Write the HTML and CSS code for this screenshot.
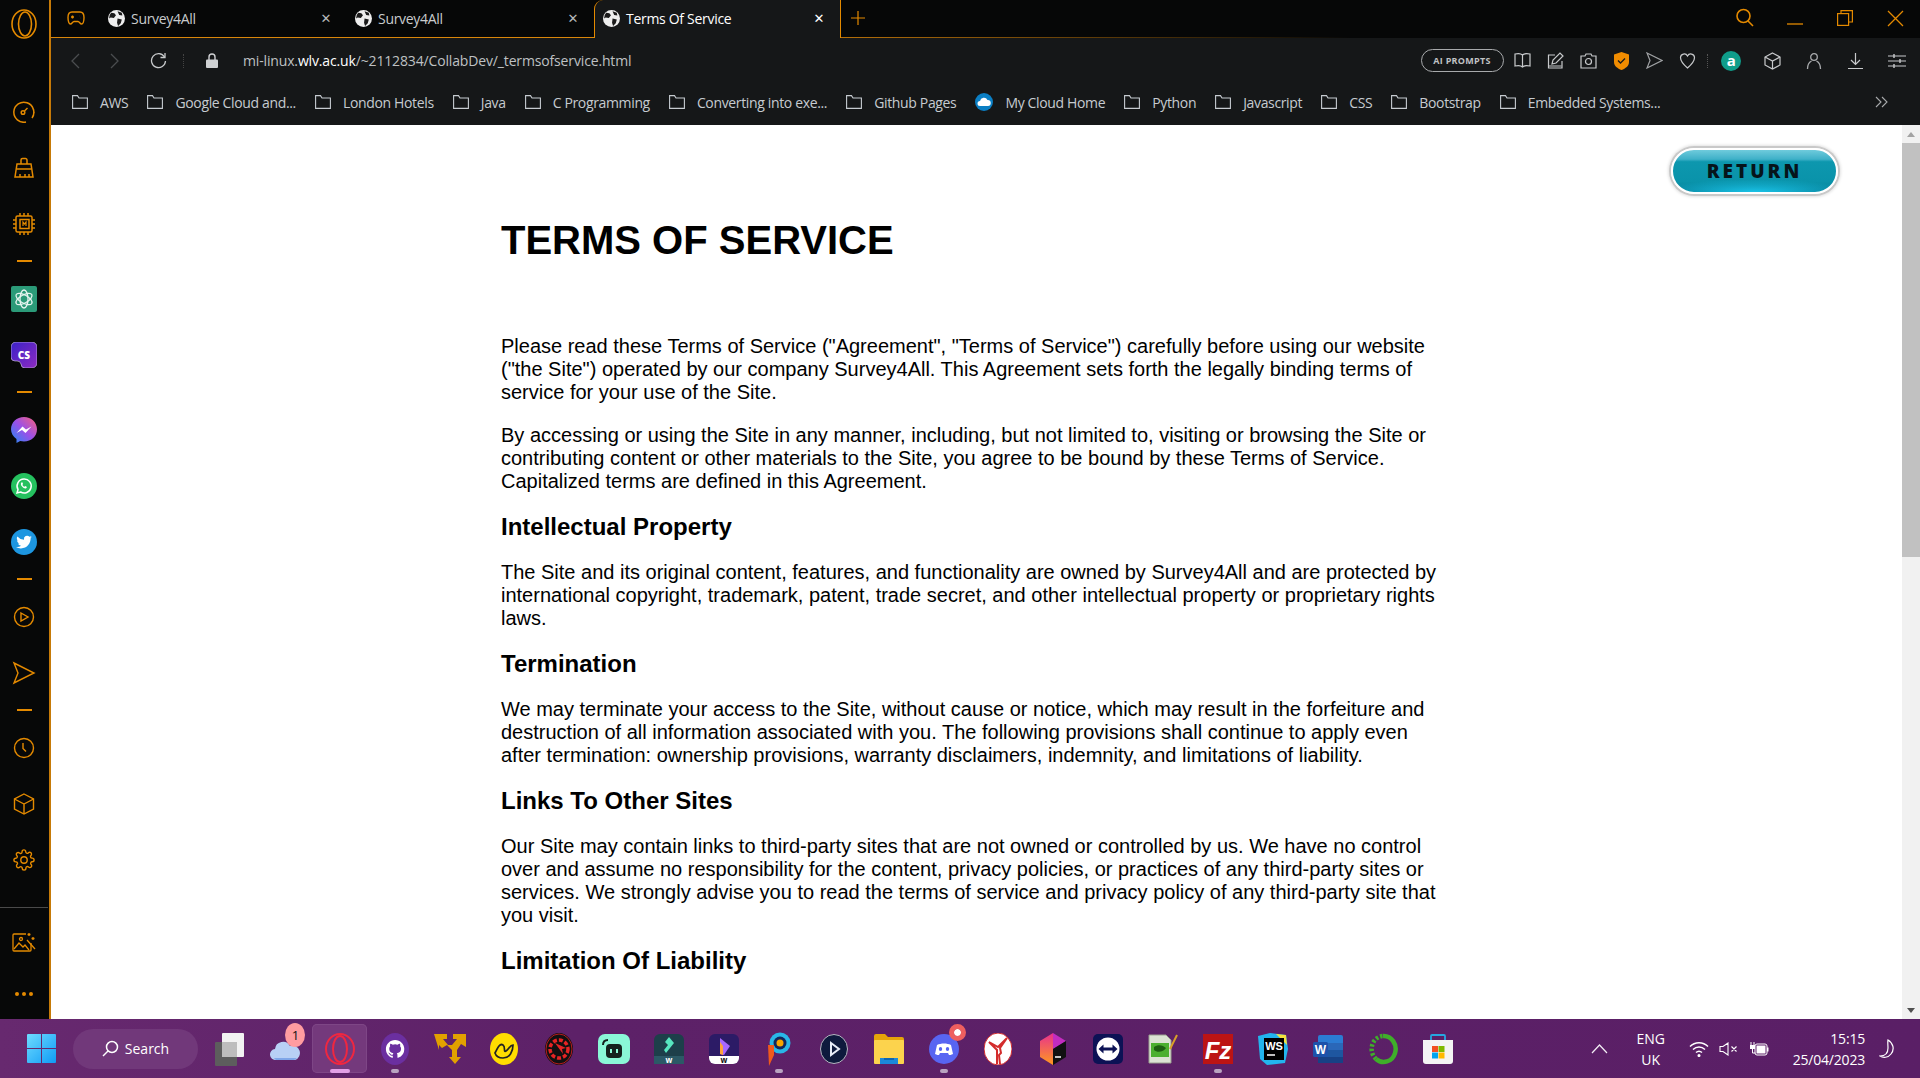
FILE: index.html
```html
<!DOCTYPE html>
<html lang="en">
<head>
    <meta charset="UTF-8">
    <title>Terms Of Service</title>
    <link rel="stylesheet" href="styles.css">
</head>
<body>
<div class="window">
    <aside class="sidebar">
        <div class="side-logo">
            <svg width="26" height="30" viewBox="0 0 26 30" fill="none" stroke="#e48a00" stroke-width="1.6"><ellipse cx="13" cy="15" rx="12" ry="14"/><ellipse cx="14" cy="15" rx="6.5" ry="12"/></svg>
        </div>
        <div class="side-group">
            <div class="side-icon"><svg width="22" height="22" viewBox="0 0 22 22" fill="none" stroke="#e48a00" stroke-width="1.5"><path d="M19 17a10 10 0 1 0-6 4"/><path d="M20.5 8v.5M20.8 11v.5M20.3 14v.5"/><circle cx="10" cy="11.5" r="1.8"/><path d="M11.5 10l3-3"/></svg></div>
            <div class="side-icon"><svg width="22" height="22" viewBox="0 0 22 22" fill="none" stroke="#e48a00" stroke-width="1.5"><path d="M8 7V3a1.5 1.5 0 0 1 1.5-1.5h3A1.5 1.5 0 0 1 14 3v4"/><path d="M4 7h14l2 13H2z"/><path d="M3.500 12h15M7 20v-3M12 20v-3M16 20v-3"/></svg></div>
            <div class="side-icon"><svg width="24" height="24" viewBox="0 0 24 24" fill="none" stroke="#e48a00" stroke-width="1.5"><rect x="4" y="4" width="16" height="16" rx="1.500"/><rect x="8" y="7.500" width="9" height="9"/><path d="M8 1v3M12 1v3M16 1v3M8 20v3M12 20v3M16 20v3M1 8h3M1 12h3M1 16h3M20 8h3M20 12h3M20 16h3"/><path d="M11 14v-4l1.500 2 1.500-2v4" stroke-width="1.200"/></svg></div>
        </div>
        <div class="side-line"></div>
        <div class="side-group">
            <div class="side-icon"><svg width="26" height="26" viewBox="0 0 26 26"><rect width="26" height="26" rx="2" fill="#2b9a78"/><g fill="none" stroke="#e6f4ef" stroke-width="1.300"><ellipse cx="13" cy="13" rx="4" ry="9"/><ellipse cx="13" cy="13" rx="4" ry="9" transform="rotate(60 13 13)"/><ellipse cx="13" cy="13" rx="4" ry="9" transform="rotate(120 13 13)"/></g></svg></div>
            <div class="side-icon"><svg width="26" height="26" viewBox="0 0 26 26"><defs><linearGradient id="csGrad" x1="0" y1="0" x2="1" y2="1"><stop offset="0" stop-color="#3a22c8"/><stop offset="1" stop-color="#8e2ac0"/></linearGradient></defs><path d="M5 0h16a5 5 0 0 1 5 5v16a5 5 0 0 1-5 5h-7a4 4 0 0 1-4-4 4 4 0 0 0-4-3H4a4 4 0 0 1-4-4V5a5 5 0 0 1 5-5z" fill="url(#csGrad)" stroke="#d8d0e8" stroke-width=".6"/><text x="13" y="17" class="cs-text">CS</text></svg></div>
        </div>
        <div class="side-line"></div>
        <div class="side-group">
            <div class="side-icon"><svg width="26" height="26" viewBox="0 0 26 26"><defs><linearGradient id="msGrad" x1="0" y1="1" x2="1" y2="0"><stop offset="0" stop-color="#1f8cf5"/><stop offset=".5" stop-color="#9a50e8"/><stop offset="1" stop-color="#f9607a"/></linearGradient></defs><path d="M13 0c7.300 0 13 5.300 13 12.300S20.300 24.600 13 24.600c-1.300 0-2.600-.2-3.800-.5L5.500 26v-4.100C2.100 19.600 0 16.200 0 12.300 0 5.300 5.700 0 13 0z" fill="url(#msGrad)"/><path d="M5.500 16l6-6.500 3.500 3 5.500-3-6 6.500-3.500-3z" fill="#fff"/></svg></div>
            <div class="side-icon"><svg width="26" height="26" viewBox="0 0 26 26"><circle cx="13" cy="13" r="13" fill="#25c15f"/><path d="M13 6a7 7 0 0 0-6 10.500L6 20l3.600-1A7 7 0 1 0 13 6z" fill="none" stroke="#fff" stroke-width="1.500"/><path d="M10.500 9.500c-1 1 -.8 2.500.5 4s3 2.300 4.200 1.700l.8-1.200-1.800-1-.8.700c-.8-.3-1.600-1.100-2-2l.7-.8-1-1.900z" fill="#fff"/></svg></div>
            <div class="side-icon"><svg width="26" height="26" viewBox="0 0 26 26"><circle cx="13" cy="13" r="13" fill="#1d96e0"/><path d="M21 8.300c-.6.300-1.200.4-1.900.5.700-.4 1.200-1 1.400-1.800-.6.400-1.300.6-2 .8a3.200 3.200 0 0 0-5.500 2.900 9.100 9.100 0 0 1-6.600-3.300 3.200 3.200 0 0 0 1 4.300c-.5 0-1-.2-1.400-.4 0 1.500 1.100 2.900 2.600 3.200-.5.100-1 .1-1.500 0 .4 1.300 1.600 2.200 3 2.200A6.400 6.400 0 0 1 5 18c1.400.9 3.100 1.400 4.900 1.400 6.400 0 9.900-5.300 9.700-10.100.6-.3 1-.6 1.400-1z" fill="#fff"/></svg></div>
        </div>
        <div class="side-line"></div>
        <div class="side-group">
            <div class="side-icon"><svg width="22" height="22" viewBox="0 0 22 22" fill="none" stroke="#e48a00" stroke-width="1.400"><circle cx="11" cy="11" r="9.500"/><path d="M8 7l7 4-7 4z"/></svg></div>
            <div class="side-icon"><svg width="24" height="24" viewBox="0 0 24 24" fill="none" stroke="#e48a00" stroke-width="1.400"><path d="M2 2l20 10L2 22l4-10z"/></svg></div>
        </div>
        <div class="side-line"></div>
        <div class="side-group">
            <div class="side-icon"><svg width="22" height="22" viewBox="0 0 22 22" fill="none" stroke="#e48a00" stroke-width="1.400"><circle cx="11" cy="11" r="9.500"/><path d="M10 6v5.500l3 3"/></svg></div>
            <div class="side-icon"><svg width="22" height="22" viewBox="0 0 22 22" fill="none" stroke="#e48a00" stroke-width="1.400"><path d="M11 1l9.500 5v10L11 21l-9.500-5V6z"/><path d="M1.500 6L11 11l9.500-5M11 11v10"/></svg></div>
            <div class="side-icon"><svg width="22" height="22" viewBox="0 0 24 24" fill="none" stroke="#e48a00" stroke-width="1.500"><circle cx="12" cy="12" r="3.500"/><path d="M19.400 15a1.650 1.650 0 0 0 .33 1.820l.06.06a2 2 0 1 1-2.830 2.830l-.06-.06a1.650 1.650 0 0 0-2.800 1.170V21a2 2 0 1 1-4 0v-.09a1.650 1.650 0 0 0-2.800-1.170l-.06.06a2 2 0 1 1-2.830-2.830l.06-.06a1.650 1.650 0 0 0-1.170-2.800H3a2 2 0 1 1 0-4h.09a1.650 1.650 0 0 0 1.170-2.800l-.06-.06a2 2 0 1 1 2.830-2.830l.06.06a1.650 1.650 0 0 0 2.800-1.170V3a2 2 0 1 1 4 0v.09a1.650 1.650 0 0 0 2.800 1.170l.06-.06a2 2 0 1 1 2.830 2.830l-.06.06a1.650 1.650 0 0 0 1.170 2.800H21a2 2 0 1 1 0 4h-.09a1.650 1.650 0 0 0-1.510 1z"/></svg></div>
        </div>
        <div class="side-bottom">
            <div class="side-icon"><svg width="24" height="22" viewBox="0 0 24 22" fill="none" stroke="#e48a00" stroke-width="1.300"><path d="M14 3H2a1 1 0 0 0-1 1v15a1 1 0 0 0 1 1h16a1 1 0 0 0 1-1v-7"/><path d="M2 18l5-6 4 4 2-2 4 5"/><circle cx="9" cy="8" r="1.500"/><path d="M15 9l8 9M17 2v3M15.500 3.500h3M21 6v3M19.500 7.500h3"/></svg></div>
            <div class="side-icon"><span class="dots"><i></i><i></i><i></i></span></div>
        </div>
    </aside>

    <div class="browser">
        <header class="tabstrip">
            <div class="tab-game"><svg width="18" height="14" viewBox="0 0 18 14" fill="none" stroke="#e48a00" stroke-width="1.400"><path d="M5 1h8c2.500 0 4 2 4 5.500 0 4-1 6.500-2.500 6.500-1.500 0-2-2.500-3.500-2.500H7C5.500 10.500 5 13 3.500 13 2 13 1 10.500 1 6.500 1 3 2.500 1 5 1z"/><path d="M4 6h3M5.500 4.500v3M12 5h.1M13.500 7h.1"/></svg></div>
            <div class="tab">
                <svg class="globe" width="17" height="17" viewBox="0 0 16 16"><circle cx="8" cy="8" r="8" fill="#eee"/><path d="M3 2.500l3 .5 1.500 2-2 2.500L2.500 7 1 8a7 7 0 0 1 2-5.500zM9 8l4 1-1 3.500-2.500 2.500-1-3zM9 1.200l4 1.500.5 2.500-3-.5z" fill="#1a1a1a"/></svg>
                <span class="tab-title">Survey4All</span>
                <span class="tab-close">&#x2715;</span>
            </div>
            <div class="tab">
                <svg class="globe" width="17" height="17" viewBox="0 0 16 16"><circle cx="8" cy="8" r="8" fill="#eee"/><path d="M3 2.500l3 .5 1.500 2-2 2.500L2.500 7 1 8a7 7 0 0 1 2-5.500zM9 8l4 1-1 3.500-2.500 2.500-1-3zM9 1.200l4 1.500.5 2.500-3-.5z" fill="#1a1a1a"/></svg>
                <span class="tab-title">Survey4All</span>
                <span class="tab-close">&#x2715;</span>
            </div>
            <div class="tab active">
                <svg class="globe" width="17" height="17" viewBox="0 0 16 16"><circle cx="8" cy="8" r="8" fill="#eee"/><path d="M3 2.500l3 .5 1.500 2-2 2.500L2.500 7 1 8a7 7 0 0 1 2-5.500zM9 8l4 1-1 3.500-2.500 2.500-1-3zM9 1.200l4 1.500.5 2.500-3-.5z" fill="#1a1a1a"/></svg>
                <span class="tab-title">Terms Of Service</span>
                <span class="tab-close">&#x2715;</span>
            </div>
            <div class="tab-new"><svg width="14" height="14" viewBox="0 0 14 14" stroke="#e48a00" stroke-width="1.200"><path d="M7 0v14M0 7h14"/></svg></div>
            <div class="win-controls">
                <div class="win-btn"><svg width="20" height="20" viewBox="0 0 20 20" fill="none" stroke="#e48a00" stroke-width="1.600"><circle cx="8.500" cy="8" r="6.500"/><path d="M13 13l5 5"/></svg></div>
                <div class="win-btn"><svg width="16" height="16" viewBox="0 0 16 16" stroke="#e48a00" stroke-width="1.300"><path d="M0 14h16"/></svg></div>
                <div class="win-btn"><svg width="16" height="16" viewBox="0 0 16 16" fill="none" stroke="#e48a00" stroke-width="1.200"><rect x=".6" y="3.600" width="11" height="11.800"/><path d="M4 3.600V.6h11.400V12h-3.800"/></svg></div>
                <div class="win-btn"><svg width="17" height="17" viewBox="0 0 17 17" stroke="#e48a00" stroke-width="1.300"><path d="M1 1l15 15M16 1L1 16"/></svg></div>
            </div>
        </header>

        <div class="toolbar">
            <div class="nav-btn"><svg width="10" height="16" viewBox="0 0 10 16" fill="none" stroke="#4a4d4f" stroke-width="1.300"><path d="M9 1L2 8l7 7"/></svg></div>
            <div class="nav-btn"><svg width="10" height="16" viewBox="0 0 10 16" fill="none" stroke="#4a4d4f" stroke-width="1.300"><path d="M1 1l7 7-7 7"/></svg></div>
            <div class="nav-btn"><svg width="17" height="17" viewBox="0 0 17 17" fill="none" stroke="#c8cacc" stroke-width="1.300"><path d="M14.500 5a7 7 0 1 0 1 4"/><path d="M15 1v4.500h-4.500"/></svg></div>
            <div class="nav-sep"></div>
            <div class="lock"><svg width="12" height="15" viewBox="0 0 12 15"><path d="M3 7V4a3 3 0 0 1 6 0v3" fill="none" stroke="#cfd1d3" stroke-width="1.400"/><rect y="6.500" width="12" height="8.500" rx="1" fill="#cfd1d3"/></svg></div>
            <div class="url">mi-linux.<b>wlv.ac.uk</b>/~2112834/CollabDev/_termsofservice.html</div>
            <div class="tools">
                <span class="ai-pill">AI PROMPTS</span>
                <div class="tool"><svg width="17" height="17" viewBox="0 0 17 17" fill="none" stroke="#c8cacc" stroke-width="1.200"><path d="M8.500 3C7 1.500 3 1.500 1 2v12c2-.5 6-.5 7.500 1 1.500-1.500 5.500-1.500 7.500-1V2c-2-.5-6-.5-7.500 1zM8.500 3v12"/></svg></div>
                <div class="tool"><svg width="17" height="17" viewBox="0 0 17 17" fill="none" stroke="#c8cacc" stroke-width="1.200"><path d="M8 3H1.500v13h13.500V9"/><path d="M5 12l1-4 7-7 3 3-7 7zM1.500 14h13"/></svg></div>
                <div class="tool"><svg width="17" height="17" viewBox="0 0 17 17" fill="none" stroke="#c8cacc" stroke-width="1.200"><path d="M1 4h4l1-2h5l1 2h4v12H1z"/><circle cx="8.500" cy="9.500" r="3"/></svg></div>
                <div class="tool"><svg width="15" height="18" viewBox="0 0 15 18"><path d="M7.500 0L15 2.500V10c0 4-3.500 6.500-7.500 8C3.500 16.500 0 14 0 10V2.500z" fill="#f08c00"/><path d="M4 8.500l2.500 2.500L11 6.500" fill="none" stroke="#1a1a1a" stroke-width="1.300"/></svg></div>
                <div class="tool"><svg width="17" height="17" viewBox="0 0 17 17" fill="none" stroke="#a0a2a4" stroke-width="1.200"><path d="M1 1l15 7.500L1 16l3-7.500z"/></svg></div>
                <div class="tool"><svg width="17" height="17" viewBox="0 0 17 17" fill="none" stroke="#c8cacc" stroke-width="1.200"><path d="M8.500 16C5 13 1.500 9.500 1.500 5.500a3.700 3.700 0 0 1 7-1.500 3.700 3.700 0 0 1 7 1.500C15.500 9.500 12 13 8.500 16z"/></svg></div>
                <div class="tools-sep"></div>
                <div class="tool tool-wide"><span class="amazon">a</span></div>
                <div class="tool tool-wide"><svg width="17" height="18" viewBox="0 0 17 18" fill="none" stroke="#c8cacc" stroke-width="1.200"><path d="M8.500 1L16 5v8l-7.500 4L1 13V5z"/><path d="M1 5l7.500 4L16 5M8.500 9v8"/></svg></div>
                <div class="tool tool-wide"><svg width="16" height="18" viewBox="0 0 16 18" fill="none" stroke="#a8aaac" stroke-width="1.300"><circle cx="8" cy="5" r="3.300"/><path d="M1.500 17c0-4 2-7 4-8M14.500 17c0-4-2-7-4-8"/></svg></div>
                <div class="tool tool-wide"><svg width="17" height="18" viewBox="0 0 17 18" fill="none" stroke="#c8cacc" stroke-width="1.200"><path d="M8.500 1v11M4 8l4.500 4.500L13 8M1 16.500h15"/></svg></div>
                <div class="tool tool-wide"><svg width="18" height="16" viewBox="0 0 18 16" fill="none" stroke="#c8cacc" stroke-width="1.200"><path d="M0 3h18M0 8h18M0 13h18"/><path d="M6 1v4M12 6v4M6 11v4" stroke-width="1.400"/></svg></div>
            </div>
        </div>

        <nav class="bookmarks">
            <a class="bm"><svg class="folder" width="16" height="14" viewBox="0 0 16 14"><path d="M.6 2v11.400h14.800V3H7L5.500.6H.6z"/></svg>AWS</a>
            <a class="bm"><svg class="folder" width="16" height="14" viewBox="0 0 16 14"><path d="M.6 2v11.400h14.800V3H7L5.500.6H.6z"/></svg>Google Cloud and...</a>
            <a class="bm"><svg class="folder" width="16" height="14" viewBox="0 0 16 14"><path d="M.6 2v11.400h14.800V3H7L5.500.6H.6z"/></svg>London Hotels</a>
            <a class="bm"><svg class="folder" width="16" height="14" viewBox="0 0 16 14"><path d="M.6 2v11.400h14.800V3H7L5.500.6H.6z"/></svg>Java</a>
            <a class="bm"><svg class="folder" width="16" height="14" viewBox="0 0 16 14"><path d="M.6 2v11.400h14.800V3H7L5.500.6H.6z"/></svg>C Programming</a>
            <a class="bm"><svg class="folder" width="16" height="14" viewBox="0 0 16 14"><path d="M.6 2v11.400h14.800V3H7L5.500.6H.6z"/></svg>Converting into exe...</a>
            <a class="bm"><svg class="folder" width="16" height="14" viewBox="0 0 16 14"><path d="M.6 2v11.400h14.800V3H7L5.500.6H.6z"/></svg>Github Pages</a>
            <a class="bm"><svg width="18" height="18" viewBox="0 0 18 18"><circle cx="9" cy="9" r="9" fill="#0b7fc4"/><path d="M5 13a2.500 2.500 0 0 1 0-5 4 4 0 0 1 7.500-1A3 3 0 0 1 13 13z" fill="#fff"/></svg>My Cloud Home</a>
            <a class="bm"><svg class="folder" width="16" height="14" viewBox="0 0 16 14"><path d="M.6 2v11.400h14.800V3H7L5.500.6H.6z"/></svg>Python</a>
            <a class="bm"><svg class="folder" width="16" height="14" viewBox="0 0 16 14"><path d="M.6 2v11.400h14.800V3H7L5.500.6H.6z"/></svg>Javascript</a>
            <a class="bm"><svg class="folder" width="16" height="14" viewBox="0 0 16 14"><path d="M.6 2v11.400h14.800V3H7L5.500.6H.6z"/></svg>CSS</a>
            <a class="bm"><svg class="folder" width="16" height="14" viewBox="0 0 16 14"><path d="M.6 2v11.400h14.800V3H7L5.500.6H.6z"/></svg>Bootstrap</a>
            <a class="bm"><svg class="folder" width="16" height="14" viewBox="0 0 16 14"><path d="M.6 2v11.400h14.800V3H7L5.500.6H.6z"/></svg>Embedded Systems...</a>
            <div class="bm-more"><svg width="13" height="12" viewBox="0 0 13 12" fill="none" stroke="#a8aaac" stroke-width="1.100"><path d="M1 1l5 5-5 5M7 1l5 5-5 5"/></svg></div>
        </nav>

        <div class="viewport">
            <main class="page">
                <article class="terms">
                    <h1>TERMS OF SERVICE</h1>
                    <p>Please read these Terms of Service ("Agreement", "Terms of Service") carefully before using our website ("the Site") operated by our company Survey4All. This Agreement sets forth the legally binding terms of service for your use of the Site.</p>
                    <p>By accessing or using the Site in any manner, including, but not limited to, visiting or browsing the Site or contributing content or other materials to the Site, you agree to be bound by these Terms of Service. Capitalized terms are defined in this Agreement.</p>
                    <h2>Intellectual Property</h2>
                    <p>The Site and its original content, features, and functionality are owned by Survey4All and are protected by international copyright, trademark, patent, trade secret, and other intellectual property or proprietary rights laws.</p>
                    <h2>Termination</h2>
                    <p>We may terminate your access to the Site, without cause or notice, which may result in the forfeiture and destruction of all information associated with you. The following provisions shall continue to apply even after termination: ownership provisions, warranty disclaimers, indemnity, and limitations of liability.</p>
                    <h2>Links To Other Sites</h2>
                    <p>Our Site may contain links to third-party sites that are not owned or controlled by us. We have no control over and assume no responsibility for the content, privacy policies, or practices of any third-party sites or services. We strongly advise you to read the terms of service and privacy policy of any third-party site that you visit.</p>
                    <h2>Limitation Of Liability</h2>
                </article>
                <a class="return-btn">RETURN</a>
            </main>
            <div class="scrollbar">
                <div class="scroll-arrow"><svg width="10" height="7" viewBox="0 0 10 7" fill="#a3a3a3"><path d="M5 1l4 5H1z"/></svg></div>
                <div class="scroll-thumb"></div>
                <div class="scroll-arrow"><svg width="10" height="7" viewBox="0 0 10 7" fill="#505050"><path d="M1 1h8L5 6z"/></svg></div>
            </div>
        </div>
    </div>
</div>

<footer class="taskbar">
    <svg class="start" width="29" height="29" viewBox="0 0 29 29"><defs><linearGradient id="winGrad" x1="0" y1="0" x2="1" y2="1"><stop offset="0" stop-color="#6fdcff"/><stop offset="1" stop-color="#0f9bf5"/></linearGradient></defs><path d="M0 1a1 1 0 0 1 1-1h13v14H0zM15 0h13a1 1 0 0 1 1 1v13H15zM0 15h14v14H1a1 1 0 0 1-1-1zM15 15h14v13a1 1 0 0 1-1 1H15z" fill="url(#winGrad)"/></svg>
    <div class="search"><svg width="17" height="17" viewBox="0 0 17 17" fill="none" stroke="#fff" stroke-width="1.500"><circle cx="10" cy="7" r="5.500"/><path d="M6 11l-5 5"/></svg>Search</div>
    <div class="apps">
        <div class="app"><svg width="30" height="34" viewBox="0 0 30 34"><rect x="0" y="10" width="22" height="24" rx="1" fill="#5d5d5d"/><rect x="7" y="1" width="22" height="24" rx="1" fill="#f2f2f2"/><rect x="7" y="10" width="15" height="15" fill="#bdbdbd"/></svg></div>
        <div class="app"><svg width="30" height="22" viewBox="0 0 30 22"><path d="M6 22a5.500 5.500 0 0 1-1-11 8 8 0 0 1 15-3 7 7 0 0 1 5 14z" fill="#b8d0f5"/><path d="M6 22a5 5 0 0 1-2-2h23a7 7 0 0 1-3 2z" fill="#7fa6e8"/></svg><span class="badge-count">1</span></div>
        <div class="app current"><svg width="30" height="32" viewBox="0 0 30 32" fill="none" stroke="#ef2740" stroke-width="2"><ellipse cx="15" cy="16" rx="14" ry="15"/><ellipse cx="15" cy="16" rx="7" ry="13"/></svg></div>
        <div class="app running"><svg width="28" height="32" viewBox="0 0 28 32"><ellipse cx="14" cy="16" rx="14" ry="16" fill="#6b2fa0"/><path transform="translate(4.500 6.500) scale(.8)" fill="#fff" d="M12 .5C5.650.5.500 5.650.500 12c0 5.080 3.290 9.390 7.860 10.910.58.110.79-.25.79-.55v-2.140c-3.200.7-3.870-1.360-3.870-1.360-.52-1.330-1.280-1.680-1.280-1.680-1.050-.72.08-.7.08-.7 1.160.08 1.770 1.190 1.770 1.190 1.030 1.760 2.700 1.250 3.360.96.1-.75.4-1.250.73-1.540-2.550-.29-5.240-1.280-5.240-5.690 0-1.260.45-2.280 1.180-3.090-.12-.29-.51-1.460.11-3.050 0 0 .97-.31 3.170 1.180a11 11 0 0 1 5.770 0c2.200-1.490 3.170-1.180 3.170-1.180.63 1.590.23 2.760.11 3.050.74.81 1.180 1.830 1.180 3.090 0 4.420-2.690 5.390-5.250 5.680.41.36.78 1.060.78 2.140v3.170c0 .31.21.67.8.55A11.500 11.500 0 0 0 23.500 12C23.500 5.650 18.350.5 12 .5z"/></svg></div>
        <div class="app"><svg width="32" height="30" viewBox="0 0 32 30"><path d="M0 0h13v5H9l5 6h4l5-6h-4V0h13v13l-5-3-4 6v7h4l-6 7-6-7h3v-7l-5-5-5 3-3-3v5z" fill="#e2a100"/></svg></div>
        <div class="app"><svg width="28" height="32" viewBox="0 0 28 32"><ellipse cx="14" cy="16" rx="14" ry="16" fill="#ffdd00"/><path d="M5 20c3-6 5-10 8-8s0 8 3 6 4-6 7-6c0 6-3 13-10 13-4 0-7-2-8-5z" fill="none" stroke="#222" stroke-width="1.700"/></svg></div>
        <div class="app"><svg width="28" height="32" viewBox="0 0 28 32"><ellipse cx="14" cy="16" rx="14" ry="16" fill="#111"/><circle cx="14" cy="16" r="9" fill="none" stroke="#e52424" stroke-width="3.500" stroke-dasharray="4 2"/><path d="M10 10l11 5-4 1 1 5z" fill="#e52424"/><ellipse cx="14" cy="16" rx="13" ry="15" fill="none" stroke="#b81c1c"/></svg></div>
        <div class="app"><svg width="32" height="30" viewBox="0 0 32 30"><rect width="32" height="30" rx="7" fill="#8af7d7"/><rect x="8" y="10" width="16" height="14" rx="4" fill="#15211e"/><path d="M5 11c0-3 2-5 5-5" fill="none" stroke="#15211e" stroke-width="2"/><path d="M13 15v4M19 15v4" stroke="#8af7d7" stroke-width="2"/></svg></div>
        <div class="app"><svg width="30" height="30" viewBox="0 0 30 30"><rect width="30" height="30" rx="6" fill="#1d3f4a"/><path d="M15 3l5 6-8 10-2-3 4-5-3-3z" fill="#57e6bf"/><rect y="22" width="30" height="8" fill="#2b5966"/><text x="15" y="29" class="mini-w">w</text></svg></div>
        <div class="app"><svg width="30" height="30" viewBox="0 0 30 30"><rect width="30" height="30" rx="6" fill="#2c1b66"/><path d="M11 4l10 8-6 9-4-1z" fill="#a768ff"/><path d="M11 8l3 4v9l-3-1z" fill="#ffa43a"/><path d="M0 22h30v2a6 6 0 0 1-6 6H6a6 6 0 0 1-6-6z" fill="#fff"/><text x="15" y="29" class="mini-w dark">w</text></svg></div>
        <div class="app running"><svg width="24" height="34" viewBox="0 0 24 34"><circle cx="13" cy="11" r="10.500" fill="#29b6e8"/><circle cx="13" cy="11" r="6.500" fill="#11265c"/><circle cx="13" cy="11" r="3.500" fill="#f7a400"/><path d="M1 13h6v10l-5 11z" fill="#f05a1c"/></svg></div>
        <div class="app"><svg width="28" height="30" viewBox="0 0 28 30"><ellipse cx="14" cy="15" rx="13.500" ry="14.500" fill="#0e1a3d" stroke="#b6b6c0"/><path d="M11 9l8 6-8 6z" fill="none" stroke="#e8ecf8" stroke-width="2"/></svg></div>
        <div class="app"><svg width="30" height="30" viewBox="0 0 30 30"><path d="M0 2a2 2 0 0 1 2-2h9l3 3h14a2 2 0 0 1 2 2v2H0z" fill="#e5a50a"/><rect y="6" width="30" height="24" rx="1" fill="#fcd34d"/><path d="M6 24h18v6H6z" fill="#1b88d9"/><path d="M10 25h10" stroke="#0c5aa0" stroke-width="1.500"/></svg></div>
        <div class="app running"><svg width="30" height="30" viewBox="0 0 30 30"><ellipse cx="15" cy="15" rx="15" ry="15" fill="#5865f2"/><path d="M8 11c4-2 10-2 14 0l2 9c-2 1-3 1-4 1l-1-2H11l-1 2c-1 0-2 0-4-1z" fill="#fff"/><ellipse cx="11.500" cy="15" rx="1.700" ry="2" fill="#5865f2"/><ellipse cx="18.500" cy="15" rx="1.700" ry="2" fill="#5865f2"/></svg><span class="badge-dot"></span></div>
        <div class="app"><svg width="28" height="32" viewBox="0 0 28 32"><ellipse cx="14" cy="16" rx="14" ry="16" fill="#fff" stroke="#d32c2c"/><path d="M13 31V17L5 9l9 5 9-9-7 10 1 5-2 2 1 9" fill="none" stroke="#d32c2c" stroke-width="2"/></svg></div>
        <div class="app"><svg width="26" height="32" viewBox="0 0 26 32"><defs><linearGradient id="jbGrad" x1="0" y1="0" x2="0" y2="1"><stop offset="0" stop-color="#e8308f"/><stop offset="1" stop-color="#ff9a1e"/></linearGradient></defs><path d="M13 0L0 8v16l13 8z" fill="url(#jbGrad)"/><path d="M13 0l13 8-13 8z" fill="#c32cc0"/><path d="M13 16l13-8v16l-13 8z" fill="#111"/><path d="M15 24h6" stroke="#fff" stroke-width="1.500"/></svg></div>
        <div class="app"><svg width="30" height="30" viewBox="0 0 30 30"><rect width="30" height="30" rx="5" fill="#0c1255"/><circle cx="15" cy="15" r="11.500" fill="#fff"/><path d="M5.500 15l5-4.500v3h9v-3l5 4.500-5 4.500v-3h-9v3z" fill="#0c1255"/></svg></div>
        <div class="app"><svg width="30" height="30" viewBox="0 0 30 30"><path d="M1 1h17l5 5v23H1z" fill="#dce2d4" stroke="#9aa090"/><rect x="3" y="9" width="18" height="14" fill="#4caf30"/><path d="M6 13c4-3 9-2 12 1-2 4-9 5-12 2z" fill="#1e5f12"/><path d="M22 15l7-14" stroke="#d9a028" stroke-width="2"/></svg></div>
        <div class="app running"><svg width="30" height="30" viewBox="0 0 30 30"><rect width="30" height="30" fill="#bc1414"/><text x="15" y="25" class="fz-text">Fz</text></svg></div>
        <div class="app"><svg width="30" height="32" viewBox="0 0 30 32"><path d="M0 3l12-3 16 2 2 14-3 14-18 2-7-6z" fill="#22b5ee"/><path d="M18 1l10 1 1 10z" fill="#f3e23f"/><rect x="6" y="5" width="20" height="22" fill="#000"/><text x="16" y="17" class="ws-text">WS</text><path d="M9 22h8" stroke="#fff" stroke-width="1.500"/></svg></div>
        <div class="app"><svg width="30" height="30" viewBox="0 0 30 30"><rect x="5" y="1" width="25" height="28" rx="2" fill="#2b7cd3"/><rect x="5" y="9" width="25" height="7" fill="#2a67b8"/><rect x="5" y="16" width="25" height="7" fill="#1e56a0"/><rect x="5" y="23" width="25" height="6" fill="#174185"/><rect y="8" width="15" height="15" rx="1.500" fill="#1d52aa"/><text x="7.500" y="20" class="word-text">W</text></svg></div>
        <div class="app"><svg width="30" height="32" viewBox="0 0 30 32" fill="none"><path d="M15 3a12 13 0 1 1-7 23" stroke="#3fae2a" stroke-width="4.500"/><path d="M8 26a12 13 0 0 1 7-23" stroke="#3fae2a" stroke-width="4.500" stroke-dasharray="2.500 2"/></svg></div>
        <div class="app"><svg width="30" height="30" viewBox="0 0 30 30"><path d="M0 6h30v21a3 3 0 0 1-3 3H3a3 3 0 0 1-3-3z" fill="#f4f4f4"/><path d="M8 6V2a1 1 0 0 1 1-1h12a1 1 0 0 1 1 1v4" fill="none" stroke="#26a6e0" stroke-width="1.800"/><rect x="9" y="12" width="6" height="6" fill="#f25022"/><rect x="15.500" y="12" width="6" height="6" fill="#7fba00"/><rect x="9" y="18.500" width="6" height="6" fill="#00a4ef"/><rect x="15.500" y="18.500" width="6" height="6" fill="#ffb900"/></svg></div>
    </div>
    <div class="tray">
        <svg class="tray-chevron" width="17" height="10" viewBox="0 0 17 10" fill="none" stroke="#f3eef5" stroke-width="1.200"><path d="M1 9l7.500-8L16 9"/></svg>
        <div class="lang"><span>ENG</span><span>UK</span></div>
        <svg class="tray-icon" width="20" height="16" viewBox="0 0 20 16" fill="none" stroke="#fff" stroke-width="1.500"><path d="M1 5.500c5-5 13-5 18 0M4 8.500c3.500-3.300 8.500-3.300 12 0M7 11.500c1.700-1.500 4.300-1.500 6 0"/><circle cx="10" cy="14.500" r=".8" fill="#fff"/></svg>
        <svg class="tray-icon" width="20" height="14" viewBox="0 0 20 14" fill="none" stroke="#fff" stroke-width="1.100"><path d="M1 4.500h3L9 1v12L4 9.500H1zM12.500 4.500l5 5M17.500 4.500l-5 5"/></svg>
        <svg class="tray-icon" width="20" height="16" viewBox="0 0 20 16"><path d="M2 1v3M5 1v3" stroke="#fff"/><rect x="1" y="4" width="5" height="4" fill="#fff"/><path d="M3.500 8v4h3" stroke="#fff" fill="none"/><rect x="6" y="3" width="12" height="11" rx="2" fill="none" stroke="#fff"/><rect x="7.500" y="4.500" width="9" height="8" fill="#fff"/><rect x="18" y="6.500" width="1.500" height="4" fill="#fff"/></svg>
        <div class="clock"><span>15:15</span><span>25/04/2023</span></div>
        <svg class="tray-moon" width="17" height="20" viewBox="0 0 17 20" fill="none" stroke="#fff" stroke-width="1.200"><path d="M9 1c5 3 7 9 3 14-3 4-8 4-11 2 5 0 8-3 8-8 0-3-.5-6 0-8z"/></svg>
    </div>
</footer>
</body>
</html>
```

FILE: styles.css
```css
* {
    box-sizing: border-box;
}
html, body {
    margin: 0;
    height: 100%;
    overflow: hidden;
}
body {
    font-family: "Open Sans", "Noto Sans", sans-serif;
    display: flex;
    flex-direction: column;
    background-color: #070808;
}
svg {
    display: block;
    flex: none;
}

.window {
    display: flex;
    height: 1019px;
}

/* left panel */
.sidebar {
    width: 51px;
    flex: none;
    display: flex;
    flex-direction: column;
    align-items: center;
    background-color: #070808;
    border-right: 2px solid #c67a08;
    padding-right: 1px;
}
.side-logo {
    height: 48px;
    margin-bottom: 50px;
    display: flex;
    align-items: center;
}
.side-group {
    display: flex;
    flex-direction: column;
    gap: 28px;
}
.side-icon {
    width: 30px;
    height: 28px;
    display: flex;
    align-items: center;
    justify-content: center;
}
.side-line {
    width: 15px;
    height: 2px;
    margin: 22px 0 23px;
    background-color: #e48a00;
}
.side-bottom {
    margin-top: auto;
    width: 100%;
    border-top: 1px solid #4a4a4a;
    padding: 20px 0 11px;
    display: flex;
    flex-direction: column;
    align-items: center;
    gap: 24px;
}
.dots {
    display: flex;
    gap: 3px;
}
.dots i {
    width: 4px;
    height: 4px;
    border-radius: 50%;
    background-color: #e48a00;
}
.cs-text {
    font: 800 10px "Open Sans", sans-serif;
    fill: #fff;
    text-anchor: middle;
}

.browser {
    flex: 1;
    min-width: 0;
    display: flex;
    flex-direction: column;
}

/* tabs */
.tabstrip {
    height: 38px;
    flex: none;
    display: flex;
    background: linear-gradient(90deg, #d9860a 0, #d9860a 543px, transparent 543px, transparent 790px, #b56f08 790px, transparent 1300px) bottom / 100% 1px no-repeat, #060707;
}
.tab-game {
    width: 49px;
    display: flex;
    align-items: center;
    justify-content: center;
    padding: 0 0 2px 0;
}
.tab {
    width: 247px;
    display: flex;
    align-items: center;
    gap: 6px;
    padding: 0 16px 2px 8px;
    color: #c9cbcd;
    font-size: 14px;
    letter-spacing: -0.3px;
}
.tab.active {
    color: #fff;
    background-color: #151718;
    border-left: 1px solid #e48a00;
    border-right: 1px solid #e48a00;
    border-top-left-radius: 9px;
}
.tab-title {
    flex: 1;
}
.tab-close {
    font-family: "DejaVu Sans", sans-serif;
    font-size: 13px;
    color: #b5b7b9;
}
.tab.active .tab-close {
    color: #fff;
}
.tab-new {
    width: 34px;
    height: 37px;
    display: flex;
    align-items: center;
    justify-content: center;
    padding-bottom: 2px;
    border-right: 0;
    margin-left: 0;
}
.win-controls {
    margin-left: auto;
    display: flex;
    padding-right: 0;
}
.win-btn {
    width: 50px;
    display: flex;
    align-items: center;
    justify-content: center;
    padding-bottom: 2px;
}

/* address bar */
.toolbar {
    height: 45px;
    flex: none;
    display: flex;
    align-items: center;
    background-color: #151718;
    padding-left: 4px;
    color: #c8cacc;
}
.nav-btn {
    width: 40px;
    display: flex;
    justify-content: center;
}
.nav-btn:nth-child(3) {
    width: 46px;
}
.nav-sep {
    width: 1px;
    height: 14px;
    margin: 0 22px 0 2px;
    border-left: 1px dotted #444;
}
.lock {
    width: 12px;
    margin-right: 25px;
}
.url {
    font-size: 14px;
    letter-spacing: -0.15px;
    color: #bfc1c3;
}
.url b {
    font-weight: 400;
    color: #fff;
}
.tools {
    margin-left: auto;
    display: flex;
    align-items: center;
    padding-right: 2px;
}
.ai-pill {
    width: 83px;
    height: 23px;
    margin-right: 2px;
    border: 1px solid #a8aaac;
    border-radius: 12px;
    display: flex;
    align-items: center;
    justify-content: center;
    font-size: 9px;
    font-weight: 700;
    letter-spacing: 0.3px;
    color: #c0c2c4;
}
.tool {
    width: 33px;
    display: flex;
    justify-content: center;
}
.tool-wide {
    width: 41.500px;
}
.tools-sep {
    width: 1px;
    height: 14px;
    margin: 0 3px 0 3px;
    border-left: 1px dotted #555;
}
.amazon {
    width: 20px;
    height: 20px;
    border-radius: 50%;
    background-color: #0f9d8a;
    color: #fff;
    font-weight: 700;
    font-size: 15px;
    line-height: 18px;
    text-align: center;
}

/* bookmarks */
.bookmarks {
    height: 42px;
    flex: none;
    display: flex;
    align-items: center;
    gap: 19px;
    background-color: #151718;
    padding: 0 0 4px 21px;
    font-size: 14px;
    letter-spacing: -0.35px;
    color: #c6cbd0;
}
.bm {
    display: flex;
    align-items: center;
    gap: 12px;
}
.folder {
    fill: none;
    stroke: #c6cbd0;
    stroke-width: 1.100;
}
.bm-more {
    margin-left: auto;
    margin-right: 32px;
}

/* page */
.viewport {
    flex: 1;
    min-height: 0;
    display: flex;
    background-color: #fff;
}
.page {
    flex: 1;
    min-width: 0;
    overflow: hidden;
    display: flex;
    align-items: flex-start;
    padding-left: 450px;
    font-family: "Liberation Sans", Arial, sans-serif;
    color: #000;
}
.terms {
    width: 948px;
    flex: none;
    font-size: 20px;
    line-height: 23px;
}
.terms h1 {
    font-size: 40px;
    line-height: 46px;
    margin: 92px 0 72px;
}
.terms h2 {
    font-size: 24px;
    line-height: 28px;
    margin: 20px 0;
}
.terms p {
    margin: 20px 0;
}
.return-btn {
    margin: 23px 64px 0 auto;
    width: 167px;
    height: 46px;
    flex: none;
    display: flex;
    align-items: center;
    justify-content: center;
    border-radius: 23px;
    border: 2px solid #fff;
    box-shadow: 0 0 0 2px #c9c9c9, 0 0 3px 3px #e2e2e2;
    background: radial-gradient(ellipse 60% 30% at 50% 100%, #19c3e8 0, transparent 100%), linear-gradient(180deg, #6fcbdc 0, #3eb0c8 22%, #0d97ae 28%, #0a93aa 75%, #067d94 100%);
    font-family: "Open Sans", sans-serif;
    font-weight: 800;
    font-size: 19px;
    letter-spacing: 3px;
    color: #06141a;
}
.scrollbar {
    width: 18px;
    flex: none;
    display: flex;
    flex-direction: column;
    background-color: #f1f1f1;
}
.scroll-arrow {
    height: 18px;
    display: flex;
    align-items: center;
    justify-content: center;
}
.scroll-thumb {
    height: 414px;
    margin-bottom: auto;
    background-color: #c1c1c1;
}

/* windows taskbar */
.taskbar {
    height: 59px;
    flex: none;
    display: flex;
    align-items: center;
    padding-left: 27px;
    background: linear-gradient(90deg, #67296f 0, #5d2168 30%, #5a1f66 100%);
    color: #fff;
}
.start {
    margin-right: 17px;
}
.search {
    width: 125px;
    height: 40px;
    display: flex;
    align-items: center;
    justify-content: center;
    gap: 6px;
    border-radius: 20px;
    background-color: #71387a;
    font-size: 14px;
}
.apps {
    margin-left: 4.500px;
    display: flex;
}
.app {
    position: relative;
    width: 54.900px;
    height: 49px;
    display: flex;
    align-items: center;
    justify-content: center;
}
.app.current {
    background-color: #74397c;
    border-radius: 5px;
    box-shadow: inset 0 0 0 1px #7e4686;
}
.app.current::after,
.app.running::after {
    content: "";
    position: absolute;
    bottom: 0;
    left: 50%;
    width: 8px;
    height: 4px;
    margin-left: -4px;
    border-radius: 2px;
    background-color: #b9a3c0;
}
.app.current::after {
    width: 20px;
    margin-left: -10px;
    background-color: #e39fe6;
}
.badge-count {
    position: absolute;
    top: -1px;
    left: 28px;
    width: 20px;
    height: 24px;
    border-radius: 50%;
    background-color: #ff9ca0;
    color: #111;
    font-size: 13px;
    line-height: 24px;
    text-align: center;
}
.badge-dot {
    position: absolute;
    top: 0;
    left: 33px;
    width: 17px;
    height: 17px;
    border-radius: 50%;
    background-color: #ee5f5f;
    border: 5px solid #ee5f5f;
    background-clip: padding-box;
    box-shadow: inset 0 0 0 4px #fff;
}
.mini-w {
    font: 700 8px "Open Sans", sans-serif;
    fill: #fff;
    text-anchor: middle;
}
.mini-w.dark {
    fill: #111;
}
.fz-text {
    font: italic 700 24px "Liberation Sans", sans-serif;
    fill: #fff;
    text-anchor: middle;
}
.ws-text {
    font: 700 11px "Liberation Sans", sans-serif;
    fill: #fff;
    text-anchor: middle;
}
.word-text {
    font: 700 12px "Liberation Sans", sans-serif;
    fill: #fff;
    text-anchor: middle;
}
.tray {
    margin-left: auto;
    display: flex;
    align-items: center;
    font-size: 14px;
}
.tray-chevron {
    margin-right: 24px;
}
.lang {
    width: 38px;
    margin-right: 19px;
    display: flex;
    flex-direction: column;
    align-items: center;
    line-height: 21px;
}
.tray-icon {
    margin-right: 10px;
}
.clock {
    display: flex;
    flex-direction: column;
    align-items: flex-end;
    line-height: 21px;
    margin-left: 14px;
    letter-spacing: -0.2px;
}
.tray-moon {
    margin: 0 24px 0 14px;
}
```
